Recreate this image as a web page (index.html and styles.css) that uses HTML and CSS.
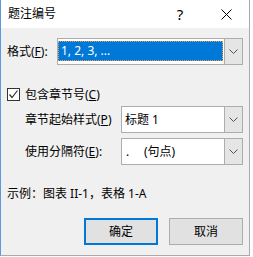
FILE: index.html
```html
<!DOCTYPE html>
<html lang="zh-CN">
<head>
  <meta charset="UTF-8">
  <title>题注编号</title>
  <link rel="stylesheet" href="styles.css">
</head>
<body>

  <div class="dialog">
    <div class="titlebar">
      <span class="title">题注编号</span>
      <span class="cap-btn help">?</span>
      <span class="cap-btn close">
        <svg width="11" height="11" viewBox="0 0 11 11"><path d="M0.5 0.5 L10.5 10.5 M10.5 0.5 L0.5 10.5" stroke="#000" stroke-width="1" fill="none"/></svg>
      </span>
    </div>

    <div class="content">
      <div class="row">
        <label>格式(<u>F</u>):</label>
        <div class="combo combo-format">
          <span class="value"><span class="selected">1, 2, 3, ...</span></span>
          <span class="drop"><svg width="9" height="5" viewBox="0 0 9 5"><path d="M0.5 0.5 L4.5 4.5 L8.5 0.5" stroke="#555" fill="none"/></svg></span>
        </div>
      </div>

      <label class="check">
        <span class="box"><svg width="11" height="11" viewBox="0 0 11 11"><path d="M1.5 5.5 L4 8.5 L9.5 1.5" stroke="#333" stroke-width="1.2" fill="none"/></svg></span>
        <span>包含章节号(<u>C</u>)</span>
      </label>

      <div class="row sub">
        <label>章节起始样式(<u>P</u>)</label>
        <div class="combo">
          <span class="value">标题 1</span>
          <span class="drop"><svg width="9" height="5" viewBox="0 0 9 5"><path d="M0.5 0.5 L4.5 4.5 L8.5 0.5" stroke="#555" fill="none"/></svg></span>
        </div>
      </div>

      <div class="row sub gap">
        <label>使用分隔符(<u>E</u>):</label>
        <div class="combo">
          <span class="value"><span class="dot">.</span>(句点)</span>
          <span class="drop"><svg width="9" height="5" viewBox="0 0 9 5"><path d="M0.5 0.5 L4.5 4.5 L8.5 0.5" stroke="#555" fill="none"/></svg></span>
        </div>
      </div>

      <p class="example">示例：图表 II-1，表格 1-A</p>

      <div class="buttons">
        <button class="btn default">确定</button>
        <button class="btn">取消</button>
      </div>
    </div>
  </div>

</body>
</html>
```

FILE: styles.css
```css
body {
  margin: 0;
  background-color: #fff;
  font-family: "Noto Sans", "Noto Sans CJK SC", sans-serif;
  font-size: 12px;
  line-height: 16px;
  color: #000;
}

.dialog {
  width: 248px;
  height: 255px;
  border-left: 1px solid #5a9be0;
  border-right: 1px solid #aaa;
  border-bottom: 1px solid #aaa;
  display: flex;
  flex-direction: column;
}

.titlebar {
  height: 28px;
  background-color: #fff;
  display: flex;
  align-items: center;
  padding-left: 7px;
}

.title {
  flex: 1;
}

.cap-btn {
  width: 46px;
  height: 28px;
  display: flex;
  align-items: center;
  justify-content: center;
}

.help {
  font-size: 15px;
}

.content {
  flex: 1;
  background-color: #f0f0f0;
  padding: 10px 6px 0 6px;
}

.row {
  display: flex;
  align-items: center;
  justify-content: space-between;
}

.row.sub {
  margin-top: 5px;
  padding-left: 18px;
}

.combo {
  width: 122px;
  height: 27px;
  box-sizing: border-box;
  border: 1px solid #adadad;
  background-color: #fff;
  display: flex;
}

.combo-format {
  width: 186px;
}

.value {
  flex: 1;
  display: flex;
  align-items: center;
  padding-left: 3px;
}

.combo-format .value {
  padding: 2px 1px 3px 0;
  align-items: stretch;
}

.selected {
  flex: 1;
  background-color: #0078d7;
  color: #fff;
  border: 1px dotted #f0a040;
  padding-left: 2px;
  display: flex;
  align-items: center;
}

.dot {
  width: 18px;
  padding-left: 1px;
}

.drop {
  width: 17px;
  background-color: #e5e5e5;
  border-left: 1px solid #adadad;
  display: flex;
  align-items: center;
  justify-content: center;
}

.check {
  margin-top: 23px;
  height: 13px;
  display: flex;
  align-items: center;
  gap: 5px;
}

.box {
  width: 11px;
  height: 11px;
  border: 1px solid #333;
  background-color: #fff;
  display: flex;
}

.example {
  margin: 21px 0 0 0;
}

.buttons {
  margin-top: 16px;
  display: flex;
  justify-content: flex-end;
  gap: 11px;
}

.btn {
  width: 74px;
  height: 27px;
  font: inherit;
  color: #000;
  background-color: #e1e1e1;
  border: 1px solid #adadad;
  padding: 0;
}

.btn.default {
  border: 2px solid #0078d7;
}
```
